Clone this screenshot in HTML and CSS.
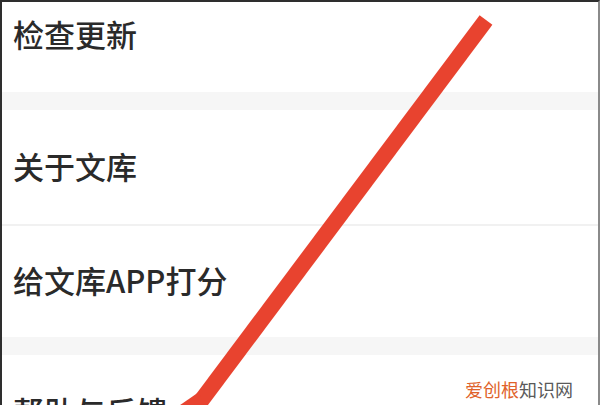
FILE: index.html
```html
<!DOCTYPE html>
<html lang="zh-CN">
<head>
<meta charset="utf-8">
<title>设置</title>
<link rel="stylesheet" href="styles.css">
</head>
<body>
<div class="frame">
  <div class="list">
    <div class="row row-first"><span class="label">检查更新</span></div>
    <div class="band"></div>
    <div class="row"><span class="label">关于文库</span></div>
    <div class="divider"></div>
    <div class="row row-third"><span class="label">给文库APP打分</span></div>
    <div class="band"></div>
    <div class="row"><span class="label">帮助与反馈</span></div>
  </div>
  <svg class="stroke" width="600" height="405" viewBox="0 0 600 405" aria-hidden="true">
    <line x1="486" y1="20" x2="183" y2="425" stroke="#e8432f" stroke-width="16" stroke-linecap="butt"/>
    <polygon points="199,392 170,412 206,412" fill="#e8432f"/>
  </svg>
  <div class="watermark"><span class="wm-orange">爱创根</span><span class="wm-gray">知识网</span></div>
</div>
</body>
</html>
```
FILE: styles.css
```css
* { box-sizing: border-box; }
html, body { margin: 0; padding: 0; background: #ffffff; }
body { width: 600px; height: 405px; overflow: hidden; }
.frame {
  position: relative;
  width: 600px;
  height: 405px;
  overflow: hidden;
  border-top: 2px solid #2e2e2e;
  border-left: 2px solid #2e2e2e;
  border-right: 2px solid #8a8a8a;
  background: #ffffff;
}
.list { display: flex; flex-direction: column; }
.row {
  flex: none;
  height: 114px;
  display: flex;
  align-items: center;
  padding-left: 11px;
  padding-bottom: 4px;
}
.row-first { height: 90px; padding-bottom: 27px; }
.row-third { height: 111px; }
.label {
  font-family: "Noto Sans CJK SC", "Noto Sans", sans-serif;
  font-size: 31px;
  font-weight: 500;
  line-height: 1;
  color: #2a2a2a;
}
.band { flex: none; height: 18px; background: #f6f6f6; }
.divider { flex: none; height: 2px; background: #f1f1f1; }
.stroke { position: absolute; left: -2px; top: -2px; }
.watermark {
  position: absolute;
  right: 25px;
  bottom: 7px;
  font-family: "Noto Sans CJK SC", "Noto Sans", sans-serif;
  font-size: 18px;
  line-height: 1;
  letter-spacing: 0;
}
.wm-orange { color: #e0622a; }
.wm-gray { color: #5a5a5a; }
```
